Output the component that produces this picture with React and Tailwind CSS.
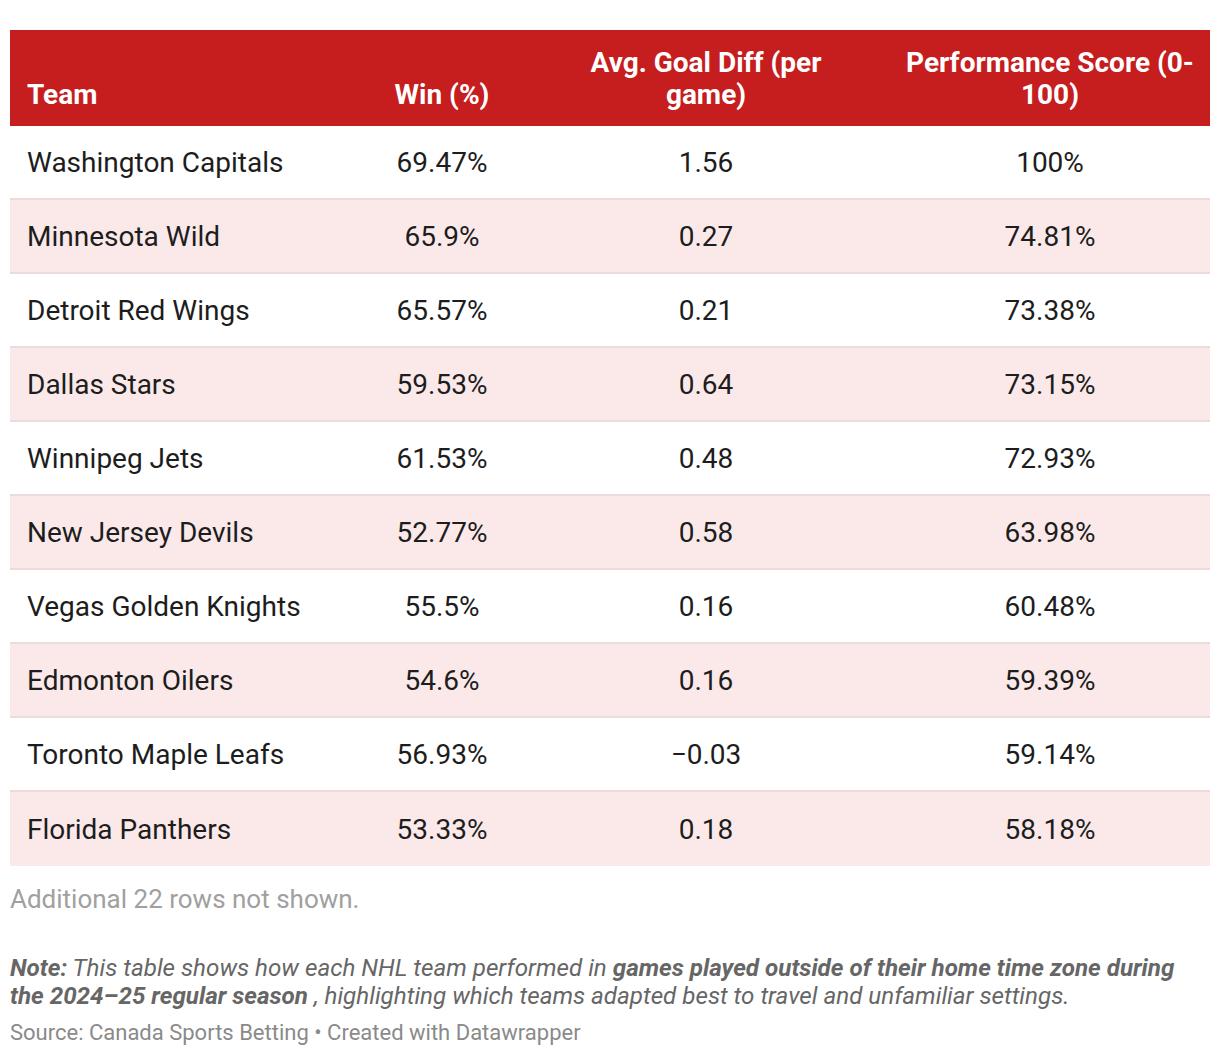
import React from "react";

const rows = [
  ["Washington Capitals", "69.47%", "1.56", "100%"],
  ["Minnesota Wild", "65.9%", "0.27", "74.81%"],
  ["Detroit Red Wings", "65.57%", "0.21", "73.38%"],
  ["Dallas Stars", "59.53%", "0.64", "73.15%"],
  ["Winnipeg Jets", "61.53%", "0.48", "72.93%"],
  ["New Jersey Devils", "52.77%", "0.58", "63.98%"],
  ["Vegas Golden Knights", "55.5%", "0.16", "60.48%"],
  ["Edmonton Oilers", "54.6%", "0.16", "59.39%"],
  ["Toronto Maple Leafs", "56.93%", "\u22120.03", "59.14%"],
  ["Florida Panthers", "53.33%", "0.18", "58.18%"],
];

export default function App() {
  return (
    <div className="bg-white w-[1220px] h-[1056px] px-[10px] pt-[30px] font-['Roboto',sans-serif] text-[#1d1d1d]">
      <div className="grid grid-cols-[352px_160px_368px_320px] bg-[#c61d1e] text-white font-bold text-[28px] leading-[32px]">
        <div className="px-[17px] pt-[17px] pb-[15px] flex items-end">Team</div>
        <div className="px-[10px] pt-[17px] pb-[15px] flex items-end justify-center text-center">Win (%)</div>
        <div className="px-[17px] pt-[17px] pb-[15px] flex items-end justify-center text-center">
          <span>Avg. Goal Diff (per<br />game)</span>
        </div>
        <div className="px-[10px] pt-[17px] pb-[15px] flex items-end justify-center text-center">
          <span>Performance Score (0-<br />100)</span>
        </div>
      </div>
      {rows.map((r, i) => (
        <div
          key={i}
          className={
            "grid grid-cols-[352px_160px_368px_320px] h-[74px] items-center pt-[2px] text-[28px] leading-[32px] " +
            (i % 2 === 1 ? "bg-[#fbe9ea] " : "bg-white ") +
            (i < rows.length - 1 ? "border-b-2 border-[#ecdcdc]" : "")
          }
        >
          <div className="px-[17px]">{r[0]}</div>
          <div className="px-[10px] text-center">{r[1]}</div>
          <div className="px-[17px] text-center">{r[2]}</div>
          <div className="px-[10px] text-center">{r[3]}</div>
        </div>
      ))}
      <div className="text-[26px] text-[#a0a0a0] mt-[17px] leading-[32px]">Additional 22 rows not shown.</div>
      <div className="mt-[39px] text-[24.2px] leading-[28px] italic text-[#666666] pr-[20px]">
        <b className="font-bold">Note:</b> This table shows how each NHL team performed in{" "}
        <b className="font-bold">games played outside of their home time zone during the 2024–25 regular season</b> ,
        highlighting which teams adapted best to travel and unfamiliar settings.
      </div>
      <div className="mt-[9px] text-[22px] leading-[28px] text-[#8a8a8a]">
        Source: Canada Sports Betting • Created with Datawrapper
      </div>
    </div>
  );
}
